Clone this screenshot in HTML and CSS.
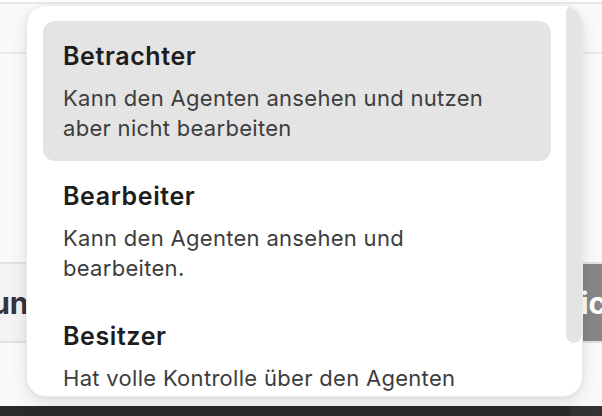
FILE: index.html
```html
<!DOCTYPE html>
<html lang="de">
<head>
<meta charset="utf-8">
<title>Rollen</title>
<link rel="stylesheet" href="styles.css">
</head>
<body>
<div class="page">
  <div class="topstrip"></div>
  <div class="header"></div>
  <div class="spacer"></div>
  <div class="actions">
    <div class="btn btn-secondary"><span>Einstellungen</span></div>
    <div class="gap"></div>
    <div class="btn btn-primary"><span>Speichern</span></div>
  </div>
  <div class="spacer2"></div>
  <div class="bottombar"><div class="bb-left"></div><div class="bb-right"></div></div>

  <div class="dropdown">
    <div class="list">
      <div class="option active">
        <div class="opt-title">Betrachter</div>
        <div class="opt-desc">Kann den Agenten ansehen und nutzen aber nicht bearbeiten</div>
      </div>
      <div class="option">
        <div class="opt-title">Bearbeiter</div>
        <div class="opt-desc">Kann den Agenten ansehen und bearbeiten.</div>
      </div>
      <div class="option">
        <div class="opt-title">Besitzer</div>
        <div class="opt-desc">Hat volle Kontrolle über den Agenten</div>
      </div>
    </div>
    <div class="thumb"></div>
  </div>
</div>
</body>
</html>
```

FILE: styles.css
```css
* { box-sizing: border-box; }
html, body { margin: 0; padding: 0; }
body {
  width: 602px;
  height: 416px;
  overflow: hidden;
  background: #fafafa;
  font-family: Inter, "Noto Sans", sans-serif;
}
.page {
  position: relative;
  width: 602px;
  height: 416px;
  display: flex;
  flex-direction: column;
  overflow: hidden;
}
.topstrip {
  height: 4px;
  background: #ffffff;
  border-bottom: 2px solid #e8e8e8;
}
.header {
  height: 50px;
  border-bottom: 2px solid #e8e8e8;
  background: #fafafa;
}
.spacer { height: 208px; }
.actions {
  height: 81px;
  display: flex;
  border-top: 2px solid #e2e2e2;
  border-bottom: 2px solid #e2e2e2;
  background: #f3f3f3;
}
.btn {
  flex: none;
  display: flex;
  align-items: center;
  overflow: hidden;
  white-space: nowrap;
  font-size: 30px;
  font-weight: 700;
}
.btn-secondary {
  width: 86px;
  justify-content: flex-end;
  padding-right: 2px;
  color: #33333f;
}
.gap { flex: 1; }
.btn-primary {
  width: 80px;
  background: #878787;
  color: #ffffff;
  justify-content: flex-start;
  padding-left: 2px;
}
.spacer2 { flex: 1; background: #fafafa; }
.bottombar {
  height: 10px;
  display: flex;
}
.bb-left { flex: 1; background: #2a2a2a; }
.bb-right { width: 32px; background: #333333; }

.dropdown {
  position: absolute;
  left: 26px;
  top: 5px;
  width: 557px;
  height: 392px;
  background: #ffffff;
  border: 1px solid #ececec;
  border-radius: 20px;
  box-shadow: 0 6px 18px rgba(0, 0, 0, 0.10), 0 1px 4px rgba(0, 0, 0, 0.05);
  overflow: hidden;
}
.list {
  padding: 15px 31px 0 16px;
  display: flex;
  flex-direction: column;
}
.option {
  padding: 19px 44px 18px 20px;
  border-radius: 12px;
}
.option.active { background: #e4e4e4; }
.opt-title {
  font-size: 25px;
  line-height: 32px;
  font-weight: 600;
  letter-spacing: 0.6px;
  color: #1d1d1d;
}
.opt-desc {
  margin-top: 11px;
  font-size: 22px;
  line-height: 30px;
  letter-spacing: 0.3px;
  color: #3d3d3d;
}
.thumb {
  position: absolute;
  top: -1px;
  right: 0;
  width: 16px;
  height: 338px;
  border-radius: 8px;
  background: #e4e4e4;
}
```
